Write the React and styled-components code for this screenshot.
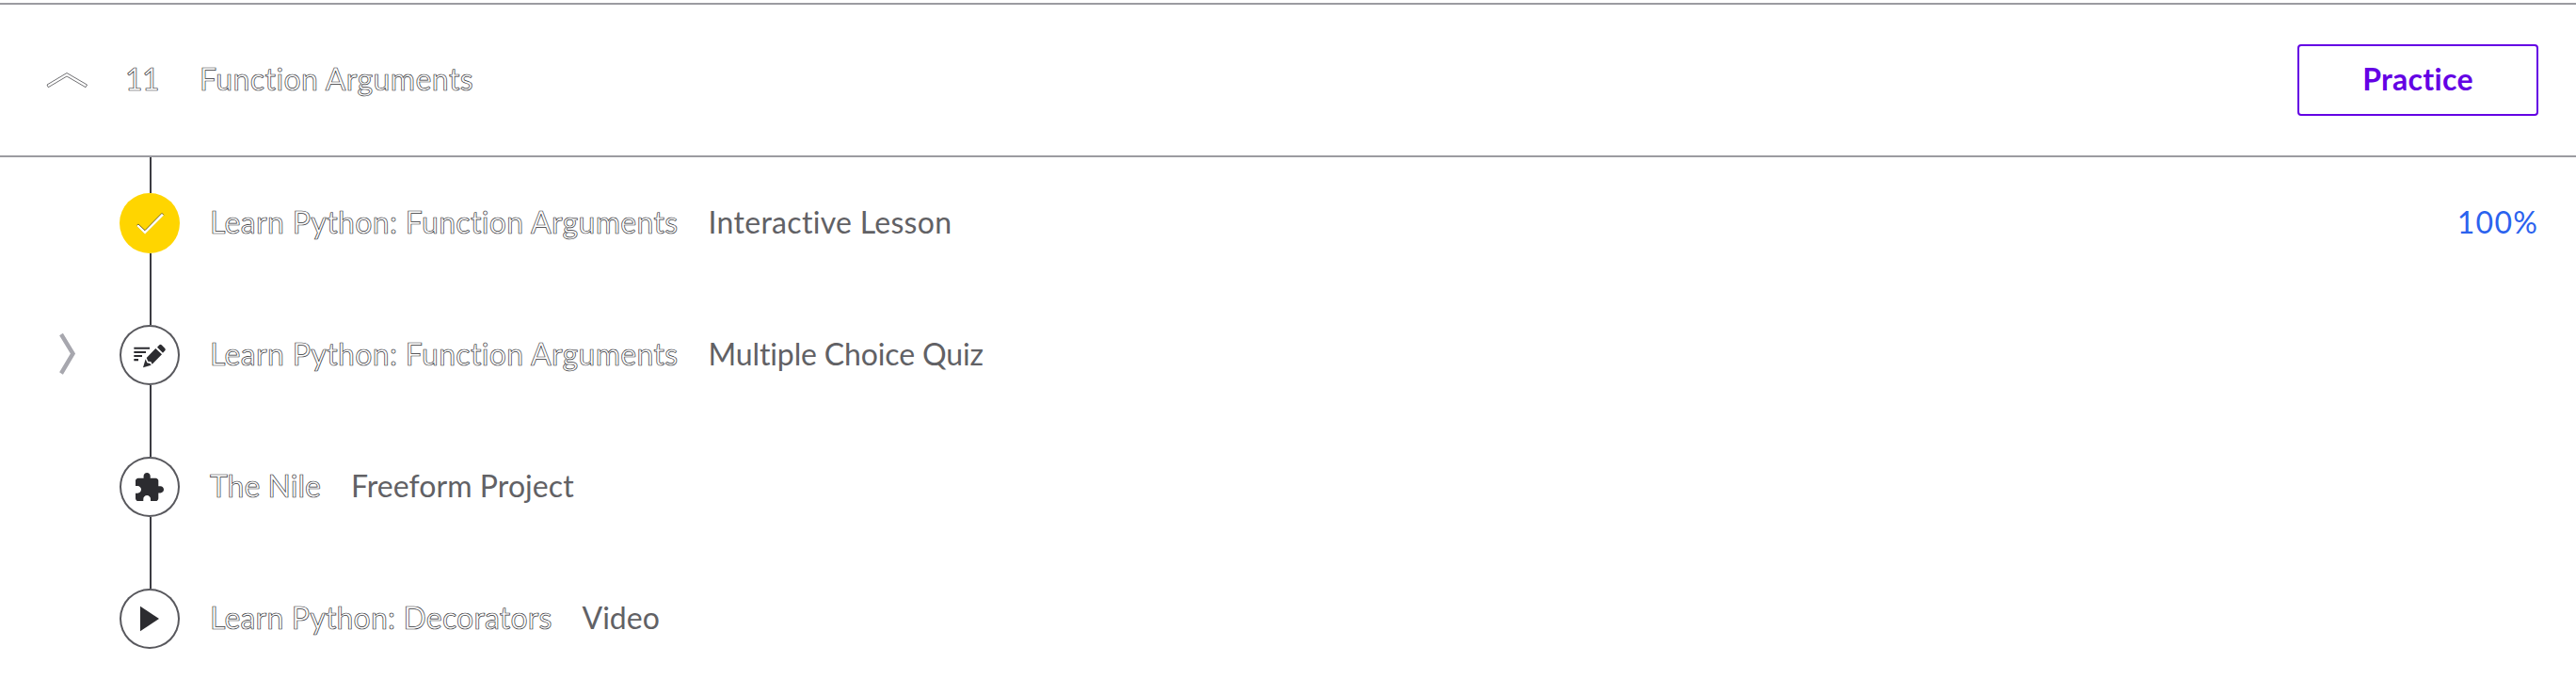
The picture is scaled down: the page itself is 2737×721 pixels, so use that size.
import React from "react";
import styled, { createGlobalStyle, css } from "styled-components";

const GlobalStyle = createGlobalStyle`
  * { box-sizing: border-box; }
  body {
    margin: 0;
    background: #fff;
    font-family: Lato, "Open Sans", sans-serif;
    font-size: 32px;
    line-height: 40px;
    color: #616165;
  }
`;

const Syllabus = styled.main`
  padding-top: 3px;
  overflow: hidden;
`;

const SectionHeader = styled.header`
  display: flex;
  align-items: center;
  height: 164px;
  padding: 0 40px 0 48px;
  border-top: 2px solid #9b9ba1;
  border-bottom: 2px solid #9b9ba1;
`;

const label = css`
  display: block;
  padding-bottom: 2px;
  white-space: nowrap;
  font-kerning: normal;
  font-variant-ligatures: none;
  letter-spacing: ${(p) => p.$tracking || 0}px;
`;

const outlined = css`
  color: #fff;
  -webkit-text-stroke: 0.7px #36363a;
`;

const SectionNumber = styled.span`
  ${label}
  ${outlined}
  width: 79px;
  margin-left: 39px;
`;

const SectionTitle = styled.h2`
  ${label}
  ${outlined}
  margin: 0 auto 0 0;
  font-size: 32px;
  font-weight: 400;
`;

const PracticeButton = styled.button`
  display: flex;
  align-items: center;
  justify-content: center;
  width: 256px;
  height: 76px;
  padding: 0;
  border: 2px solid #6400e4;
  border-radius: 4px;
  background: #fff;
  color: #6400e4;
  font: 700 32px/40px Lato, "Open Sans", sans-serif;
`;

const ButtonLabel = styled.span`
  ${label}
`;

const Lessons = styled.ol`
  margin: 0;
  padding: 0;
  list-style: none;
`;

const LessonRow = styled.li`
  display: flex;
  align-items: flex-end;
  padding: 0 40px 0 48px;
`;

const ToggleCell = styled.div`
  display: flex;
  align-items: center;
  width: 79px;
  height: 64px;
`;

const Track = styled.div`
  display: flex;
  flex-direction: column;
  align-items: center;
  width: 64px;
`;

const Connector = styled.div`
  width: 2px;
  height: ${(p) => (p.$first ? 38 : 76)}px;
  margin-left: 2px;
  background: #3c3c42;
`;

const Node = styled.div`
  width: 64px;
  height: 64px;
  border-radius: 50%;
  background: ${(p) => (p.$done ? "#ffd500" : "#fff")};
  box-shadow: ${(p) => (p.$done ? "none" : "inset 0 0 0 2px #58585d")};
`;

const NodeIcon = styled.svg`
  display: block;
  width: 64px;
  height: 64px;
  fill: #2c2c30;
`;

const LessonBody = styled.div`
  display: flex;
  flex: 1;
  align-items: center;
  gap: 32px;
  height: 64px;
  padding-left: 32px;
`;

const LessonTitle = styled.span`
  ${label}
  ${outlined}
`;

const LessonKind = styled.span`
  ${label}
`;

const Score = styled.span`
  ${label}
  margin-left: auto;
  color: #2b62ee;
`;

const ChevronUp = () => (
  <svg width="46" height="20" viewBox="48 74 46 20">
    <path
      d="M50 89 71 76.5 92.5 89 91 91.7 71 80 51.3 91.7Z"
      fill="#fff"
      stroke="#4c4c50"
      strokeWidth=".8"
      strokeLinejoin="round"
    />
  </svg>
);

const ChevronRight = () => (
  <svg width="36" height="64" viewBox="48 345 36 64">
    <path d="M65 355 77.5 375.5 65 396.5" fill="none" stroke="#a7a7ae" strokeWidth="4.4" />
  </svg>
);

const CheckIcon = () => (
  <NodeIcon viewBox="6 15 192 192">
    <path d="M60 119 66 114 87 134 141 79 147 86 87 146Z" fill="#fff" />
    <path d="M61 118 66 114 87 134 141 79 147 85" fill="none" stroke="#51450b" strokeWidth="2.4" />
    <path d="M60 120 87 146 147 86" fill="none" stroke="#d9b600" strokeWidth="1.2" />
  </NodeIcon>
);

const QuizIcon = () => (
  <NodeIcon viewBox="21 15 192 192">
    <path d="M67 86h50v6H67zM67 99h38v6H67zM67 111h26v6H67zM67 123h14v7H67z" />
    <path d="M141 86 148 79Q151 76 155 79L166 90Q169 94 166 97L159 104Z" />
    <path d="M136 90 156 109 125 140 121 132 112 131 107 120Z" />
    <path d="M104 124 109 136 118 138 122 143 96 151Z" />
  </NodeIcon>
);

const ProjectIcon = () => (
  <NodeIcon viewBox="6 15 192 192">
    <path
      transform="translate(48.4 61.7) scale(4.29)"
      d="M20.5 11H19V7c0-1.1-.9-2-2-2h-4V3.5C13 2.12 11.88 1 10.5 1S8 2.12 8 3.5V5H4c-1.1 0-1.99.9-1.99 2v3.8H3.5c1.49 0 2.7 1.21 2.7 2.7s-1.21 2.7-2.7 2.7H2V20c0 1.1.9 2 2 2h3.8v-1.5c0-1.49 1.21-2.7 2.7-2.7s2.7 1.21 2.7 2.7V22H17c1.1 0 2-.9 2-2v-4h1.5c1.38 0 2.5-1.12 2.5-2.5S21.88 11 20.5 11z"
    />
  </NodeIcon>
);

const VideoIcon = () => (
  <NodeIcon viewBox="0 0 64 64">
    <path d="M22 18.7 42 32 22 45.3Z" />
  </NodeIcon>
);

const lessons = [
  { title: "Learn Python: Function Arguments", tracking: 0.34, kind: "Interactive Lesson", kindTracking: 0.3, icon: CheckIcon, done: true, score: "100%" },
  { title: "Learn Python: Function Arguments", tracking: 0.34, kind: "Multiple Choice Quiz", kindTracking: -0.14, icon: QuizIcon, expandable: true },
  { title: "The Nile", tracking: 0, kind: "Freeform Project", kindTracking: 0.07, icon: ProjectIcon },
  { title: "Learn Python: Decorators", tracking: 0.18, kind: "Video", kindTracking: 0, icon: VideoIcon },
];

export default function App() {
  return (
    <Syllabus>
      <GlobalStyle />
      <SectionHeader>
        <ChevronUp />
        <SectionNumber $tracking={-0.6}>11</SectionNumber>
        <SectionTitle $tracking={0.41}>Function Arguments</SectionTitle>
        <PracticeButton>
          <ButtonLabel $tracking={0.29}>Practice</ButtonLabel>
        </PracticeButton>
      </SectionHeader>
      <Lessons>
        {lessons.map(({ icon: Icon, ...lesson }, i) => (
          <LessonRow key={i}>
            <ToggleCell>{lesson.expandable && <ChevronRight />}</ToggleCell>
            <Track>
              <Connector $first={i === 0} />
              <Node $done={lesson.done}>
                <Icon />
              </Node>
            </Track>
            <LessonBody>
              <LessonTitle $tracking={lesson.tracking}>{lesson.title}</LessonTitle>
              <LessonKind $tracking={lesson.kindTracking}>{lesson.kind}</LessonKind>
              {lesson.score && <Score $tracking={1.2}>{lesson.score}</Score>}
            </LessonBody>
          </LessonRow>
        ))}
      </Lessons>
    </Syllabus>
  );
}
